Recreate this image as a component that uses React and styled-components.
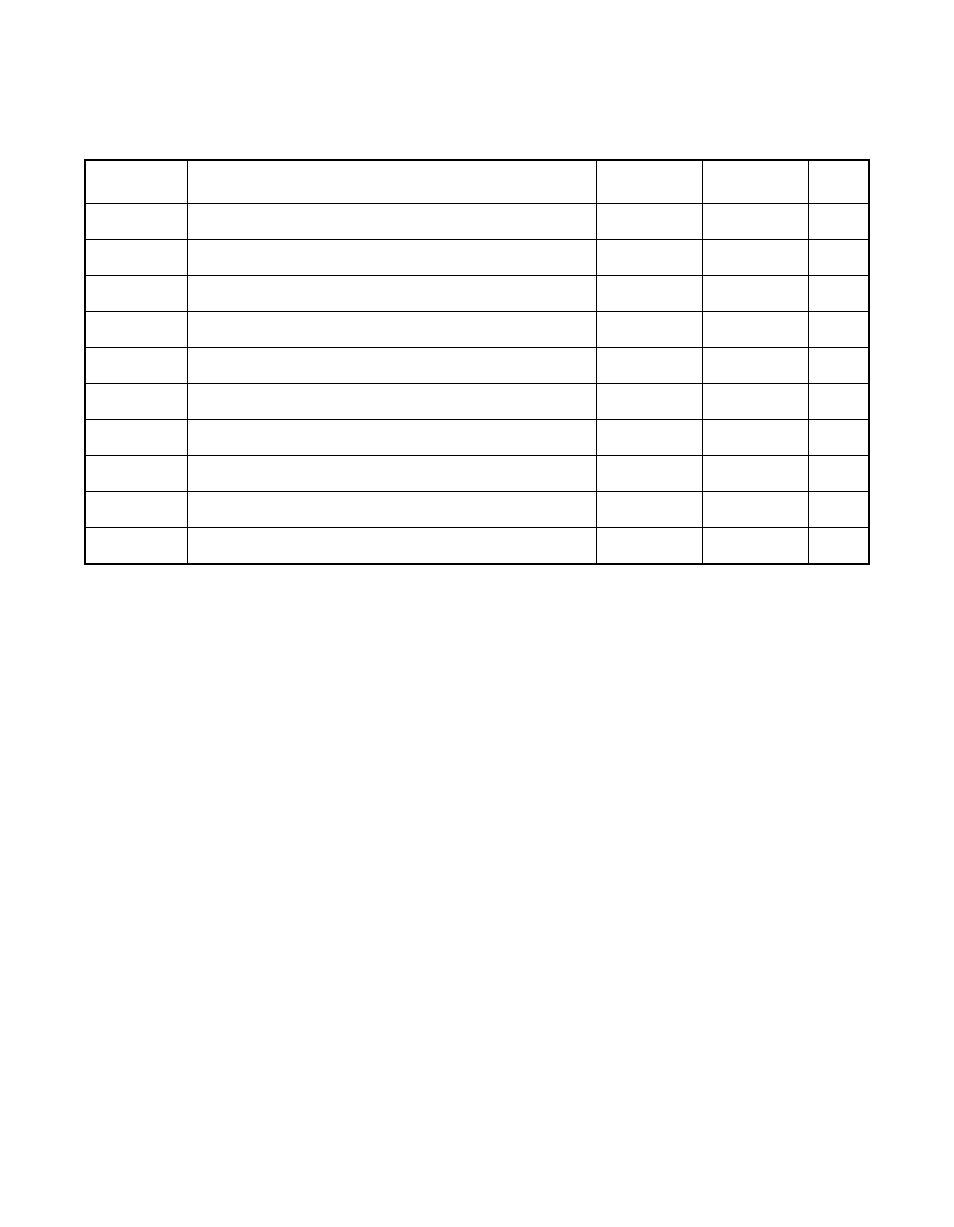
import React from "react";
import styled, { createGlobalStyle } from "styled-components";

const GlobalStyle = createGlobalStyle`
  html, body {
    margin: 0;
    padding: 0;
    background: #ffffff;
    font-family: "Liberation Serif", "Times New Roman", serif;
  }
`;

// column widths, taken from the page
const columns = [102, 409, 106, 106, 61];
const rowCount = 10;

const Page = styled.div`
  width: 954px;
  height: 1227px;
  padding: 159px 0 0 84px;
  box-sizing: border-box;
`;

const Table = styled.table`
  border-collapse: collapse;
  table-layout: fixed;
  border: 2px solid #000;
`;

const Cell = styled.td`
  border: 1px solid #000;
  padding: 0;
  height: ${({ $head }) => ($head ? "42px" : "35px")};
  font-size: 14px;
`;

const App = () => {
  return (
    <>
      <GlobalStyle />
      <Page>
        <Table>
          <colgroup>
            {columns.map((w, i) => (
              <col key={i} style={{ width: w }} />
            ))}
          </colgroup>
          <tbody>
            <tr>
              {columns.map((_, i) => (
                <Cell key={i} $head />
              ))}
            </tr>
            {Array.from({ length: rowCount }).map((_, r) => (
              <tr key={r}>
                {columns.map((_, i) => (
                  <Cell key={i} />
                ))}
              </tr>
            ))}
          </tbody>
        </Table>
      </Page>
    </>
  );
};

export default App;
